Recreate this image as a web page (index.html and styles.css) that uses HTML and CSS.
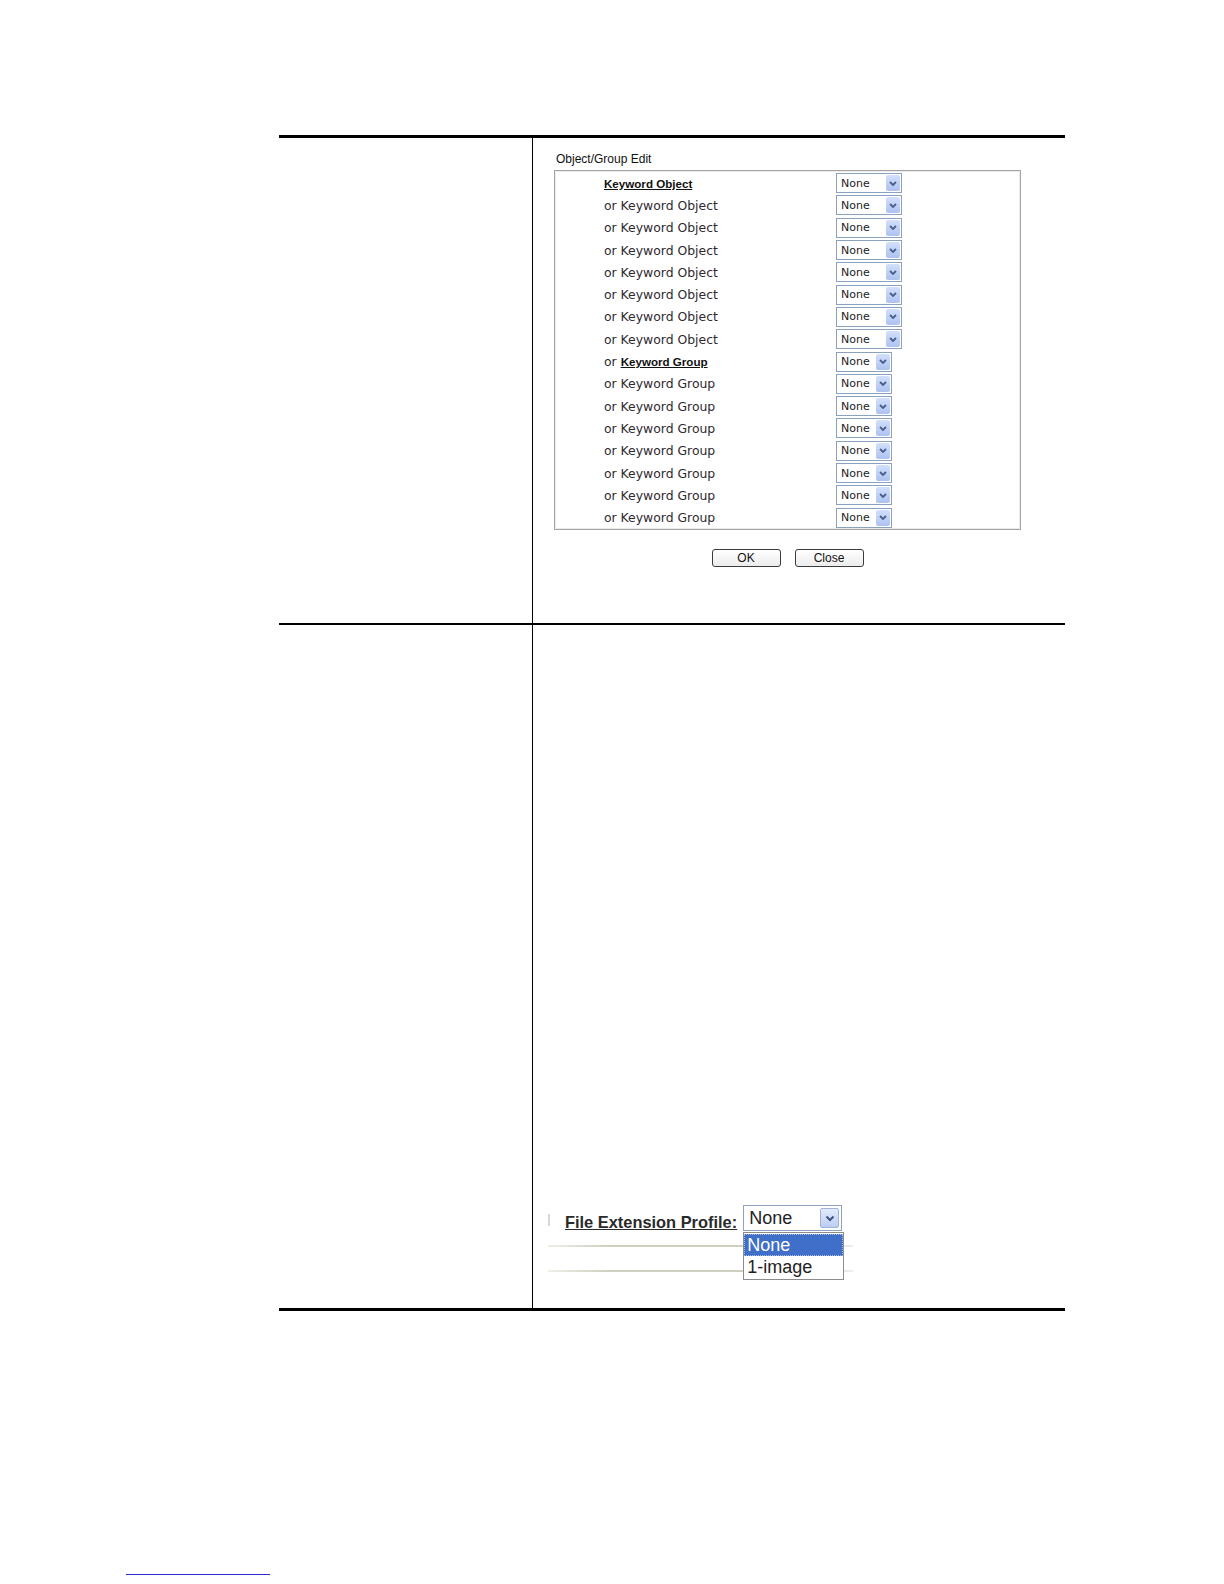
FILE: index.html
```html
<!DOCTYPE html>
<html>
<head>
<meta charset="utf-8">
<link rel="stylesheet" href="styles.css">
</head>
<body>
<div class="page">
  <div class="table">
    <div class="row row1">
      <div class="cell-left"></div>
      <div class="cell-right">
        <div class="title">Object/Group Edit</div>
        <div class="box">
          <div class="item"><span class="lbl"><a class="lnk">Keyword Object</a></span><span class="sel wide"><span class="val">None</span><span class="arr"><svg viewBox="0 0 8 5" width="8" height="5"><path d="M1 1 L4 4 L7 1" fill="none" stroke="#4a5f8c" stroke-width="1.8"/></svg></span></span></div>
          <div class="item"><span class="lbl">or Keyword Object</span><span class="sel wide"><span class="val">None</span><span class="arr"><svg viewBox="0 0 8 5" width="8" height="5"><path d="M1 1 L4 4 L7 1" fill="none" stroke="#4a5f8c" stroke-width="1.8"/></svg></span></span></div>
          <div class="item"><span class="lbl">or Keyword Object</span><span class="sel wide"><span class="val">None</span><span class="arr"><svg viewBox="0 0 8 5" width="8" height="5"><path d="M1 1 L4 4 L7 1" fill="none" stroke="#4a5f8c" stroke-width="1.8"/></svg></span></span></div>
          <div class="item"><span class="lbl">or Keyword Object</span><span class="sel wide"><span class="val">None</span><span class="arr"><svg viewBox="0 0 8 5" width="8" height="5"><path d="M1 1 L4 4 L7 1" fill="none" stroke="#4a5f8c" stroke-width="1.8"/></svg></span></span></div>
          <div class="item"><span class="lbl">or Keyword Object</span><span class="sel wide"><span class="val">None</span><span class="arr"><svg viewBox="0 0 8 5" width="8" height="5"><path d="M1 1 L4 4 L7 1" fill="none" stroke="#4a5f8c" stroke-width="1.8"/></svg></span></span></div>
          <div class="item"><span class="lbl">or Keyword Object</span><span class="sel wide"><span class="val">None</span><span class="arr"><svg viewBox="0 0 8 5" width="8" height="5"><path d="M1 1 L4 4 L7 1" fill="none" stroke="#4a5f8c" stroke-width="1.8"/></svg></span></span></div>
          <div class="item"><span class="lbl">or Keyword Object</span><span class="sel wide"><span class="val">None</span><span class="arr"><svg viewBox="0 0 8 5" width="8" height="5"><path d="M1 1 L4 4 L7 1" fill="none" stroke="#4a5f8c" stroke-width="1.8"/></svg></span></span></div>
          <div class="item"><span class="lbl">or Keyword Object</span><span class="sel wide"><span class="val">None</span><span class="arr"><svg viewBox="0 0 8 5" width="8" height="5"><path d="M1 1 L4 4 L7 1" fill="none" stroke="#4a5f8c" stroke-width="1.8"/></svg></span></span></div>
          <div class="item"><span class="lbl">or <a class="lnk">Keyword Group</a></span><span class="sel"><span class="val">None</span><span class="arr"><svg viewBox="0 0 8 5" width="8" height="5"><path d="M1 1 L4 4 L7 1" fill="none" stroke="#4a5f8c" stroke-width="1.8"/></svg></span></span></div>
          <div class="item"><span class="lbl">or Keyword Group</span><span class="sel"><span class="val">None</span><span class="arr"><svg viewBox="0 0 8 5" width="8" height="5"><path d="M1 1 L4 4 L7 1" fill="none" stroke="#4a5f8c" stroke-width="1.8"/></svg></span></span></div>
          <div class="item"><span class="lbl">or Keyword Group</span><span class="sel"><span class="val">None</span><span class="arr"><svg viewBox="0 0 8 5" width="8" height="5"><path d="M1 1 L4 4 L7 1" fill="none" stroke="#4a5f8c" stroke-width="1.8"/></svg></span></span></div>
          <div class="item"><span class="lbl">or Keyword Group</span><span class="sel"><span class="val">None</span><span class="arr"><svg viewBox="0 0 8 5" width="8" height="5"><path d="M1 1 L4 4 L7 1" fill="none" stroke="#4a5f8c" stroke-width="1.8"/></svg></span></span></div>
          <div class="item"><span class="lbl">or Keyword Group</span><span class="sel"><span class="val">None</span><span class="arr"><svg viewBox="0 0 8 5" width="8" height="5"><path d="M1 1 L4 4 L7 1" fill="none" stroke="#4a5f8c" stroke-width="1.8"/></svg></span></span></div>
          <div class="item"><span class="lbl">or Keyword Group</span><span class="sel"><span class="val">None</span><span class="arr"><svg viewBox="0 0 8 5" width="8" height="5"><path d="M1 1 L4 4 L7 1" fill="none" stroke="#4a5f8c" stroke-width="1.8"/></svg></span></span></div>
          <div class="item"><span class="lbl">or Keyword Group</span><span class="sel"><span class="val">None</span><span class="arr"><svg viewBox="0 0 8 5" width="8" height="5"><path d="M1 1 L4 4 L7 1" fill="none" stroke="#4a5f8c" stroke-width="1.8"/></svg></span></span></div>
          <div class="item"><span class="lbl">or Keyword Group</span><span class="sel"><span class="val">None</span><span class="arr"><svg viewBox="0 0 8 5" width="8" height="5"><path d="M1 1 L4 4 L7 1" fill="none" stroke="#4a5f8c" stroke-width="1.8"/></svg></span></span></div>
        </div>
        <div class="buttons">
          <span class="btn">OK</span>
          <span class="btn">Close</span>
        </div>
      </div>
    </div>
    <div class="row row2">
      <div class="cell-left"></div>
      <div class="cell-right">
        <div class="snap">
          <div class="snap-row">
            <span class="ghost"></span>
            <span class="fe-label">File Extension Profile:</span>
            <span class="fe-sel">
              <span class="fe-val">None</span>
              <span class="fe-arr"><svg viewBox="0 0 10 7" width="10" height="7"><path d="M1.5 1.5 L5 5 L8.5 1.5" fill="none" stroke="#3d5486" stroke-width="2"/></svg></span>
              <span class="fe-list">
                <span class="fe-opt fe-hi">None</span>
                <span class="fe-opt">1-image</span>
              </span>
            </span>
          </div>
          <div class="faint faint1"></div>
          <div class="faint faint2"></div>
        </div>
      </div>
    </div>
  </div>
  <div class="footrule"></div>
</div>
</body>
</html>
```
FILE: styles.css
```css
html, body {
  margin: 0;
  padding: 0;
  background: #fff;
}
.page {
  padding-top: 135px;
  padding-bottom: 9px;
}
.table {
  margin-left: 279px;
  width: 786px;
  border-top: 3px solid #000;
}
.row {
  display: grid;
  grid-template-columns: 253px 1fr;
}
.row1 {
  height: 485px;
  border-bottom: 2px solid #000;
}
.row2 {
  height: 683px;
  border-bottom: 3px solid #000;
}
.cell-right {
  border-left: 1px solid #000;
  padding-left: 21px;
}
.row1 .cell-right {
  padding-top: 14px;
}
.title {
  font-family: "Liberation Sans", Arial, sans-serif;
  font-size: 12px;
  line-height: 14px;
  color: #111;
  padding-left: 2px;
  margin-bottom: 4px;
}
.box {
  width: 467px;
  height: 360px;
  box-sizing: border-box;
  border: 1px solid #a4a4a4;
  box-shadow: inset 0 0 0 1px #ececec;
  padding-top: 1px;
}
.item {
  display: grid;
  grid-template-columns: 232px auto;
  align-items: center;
  height: 22.3px;
  padding-left: 49px;
}
.lbl {
  font-family: "DejaVu Sans", Verdana, sans-serif;
  font-size: 12.4px;
  color: #2e2a30;
  white-space: nowrap;
}
.lnk {
  font-family: "Liberation Sans", Arial, sans-serif;
  font-weight: bold;
  font-size: 11.6px;
  color: #111;
  text-decoration: underline;
}
.sel {
  display: flex;
  align-items: center;
  justify-content: space-between;
  width: 56px;
  height: 20px;
  box-sizing: border-box;
  border: 1px solid #8aa1c0;
  background: #fff;
}
.sel.wide {
  width: 66px;
}
.val {
  font-family: "DejaVu Sans", Tahoma, sans-serif;
  font-size: 11px;
  color: #222;
  padding-left: 4px;
}
.arr {
  display: flex;
  align-items: center;
  justify-content: center;
  width: 14px;
  height: 16px;
  margin-right: 1px;
  border-radius: 2px;
  background: linear-gradient(#d3e0fb, #adc2f0);
}
.buttons {
  display: flex;
  justify-content: center;
  gap: 14px;
  width: 467px;
  margin-top: 19px;
}
.btn {
  display: flex;
  align-items: center;
  justify-content: center;
  width: 69px;
  height: 18px;
  box-sizing: border-box;
  border: 1px solid #3c3c3c;
  border-radius: 3px;
  background: linear-gradient(#ffffff, #ececec);
  font-family: "Liberation Sans", Arial, sans-serif;
  font-size: 12px;
  color: #111;
}
.row2 .cell-right {
  padding-left: 15px;
  padding-top: 580px;
}
.snap {
  width: 305px;
}
.snap-row {
  display: flex;
  align-items: center;
  height: 26px;
}
.ghost {
  width: 2px;
  height: 12px;
  background: #d8d8d8;
  margin-right: 15px;
  margin-top: 4px;
}
.fe-label {
  font-family: "Liberation Sans", Arial, sans-serif;
  font-size: 16.4px;
  font-weight: bold;
  color: #2a2a2a;
  text-decoration: underline;
  margin-right: 6px;
  margin-top: 8px;
  white-space: nowrap;
}
.fe-sel {
  position: relative;
  display: flex;
  align-items: center;
  justify-content: space-between;
  width: 99px;
  height: 26px;
  box-sizing: border-box;
  border: 1px solid #8ea3c4;
  background: #fff;
}
.fe-val {
  font-family: "Liberation Sans", Arial, sans-serif;
  font-size: 18px;
  color: #222;
  padding-left: 5px;
}
.fe-arr {
  display: flex;
  align-items: center;
  justify-content: center;
  width: 19px;
  height: 20px;
  margin-right: 2px;
  box-sizing: border-box;
  border: 1px solid #9fb4d8;
  border-radius: 2px;
  background: linear-gradient(#e3ebfc, #bccdf4);
}
.fe-list {
  position: absolute;
  left: -1px;
  top: 26px;
  width: 101px;
  box-sizing: border-box;
  border: 1px solid #8c8c8c;
  background: #fff;
  display: flex;
  flex-direction: column;
  padding: 1px 0;
}
.fe-opt {
  height: 22px;
  line-height: 22px;
  padding-left: 3px;
  font-family: "Liberation Sans", Arial, sans-serif;
  font-size: 18px;
  color: #222;
}
.fe-hi {
  background: #3f6fc9;
  color: #fff;
  outline: 1px dotted #a9b8d8;
  outline-offset: -1px;
}
.faint {
  height: 2px;
  background: linear-gradient(90deg, rgba(200,200,185,0.3), #cfcfc0 20%, #cfcfc0 80%, rgba(200,200,185,0.3));
}
.faint1 {
  margin-top: 14px;
}
.faint2 {
  margin-top: 23px;
}
.footrule {
  margin-left: 126px;
  margin-top: 263px;
  width: 144px;
  height: 1px;
  background: #2a2ad8;
}
```
